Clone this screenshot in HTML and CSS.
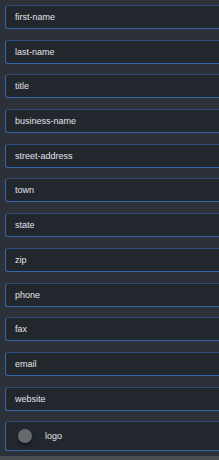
FILE: index.html
```html
<!DOCTYPE html>
<html lang="en">
<head>
    <meta charset="UTF-8">
    <meta name="viewport" content="width=device-width, initial-scale=1.0">
    <title>fields</title>
    <link rel="stylesheet" href="styles.css">
</head>
<body>
    <div class="field-list">
        <div class="field">first-name</div>
        <div class="field">last-name</div>
        <div class="field">title</div>
        <div class="field">business-name</div>
        <div class="field">street-address</div>
        <div class="field">town</div>
        <div class="field">state</div>
        <div class="field">zip</div>
        <div class="field">phone</div>
        <div class="field">fax</div>
        <div class="field">email</div>
        <div class="field">website</div>
        <div class="field field-logo">
            <span class="dot"></span>
            <span>logo</span>
        </div>
    </div>
    <div class="footer-strip"></div>
</body>
</html>
```

FILE: styles.css
```css
html, body {
    margin: 0;
    height: 100%;
}

body {
    background: #2c3139;
    font-family: 'Liberation Sans', Arial, sans-serif;
    overflow: hidden;
    display: flex;
    flex-direction: column;
}

.field-list {
    flex: 1;
    padding: 5px 0 0 5px;
    display: flex;
    flex-direction: column;
    gap: 10.7px;
}

/* box runs off the right edge, so no right border */
.field {
    box-sizing: border-box;
    height: 24px;
    flex-shrink: 0;
    padding-left: 9px;
    display: flex;
    align-items: center;
    background: #22262d;
    border: 1px solid #3467a3;
    border-top-color: #2a4d78;
    border-right: none;
    border-radius: 3px 0 0 3px;
    color: #e2e4e8;
    font-size: 9px;
}

.field-logo {
    height: 30px;
    padding-left: 12px;
    gap: 13px;
}

.dot {
    width: 14px;
    height: 14px;
    border-radius: 50%;
    background: #66686c;
    box-shadow: 0 3px 3px rgba(0, 0, 0, 0.35);
}

.footer-strip {
    height: 4px;
    flex-shrink: 0;
    background: #4a4d52;
}
```
